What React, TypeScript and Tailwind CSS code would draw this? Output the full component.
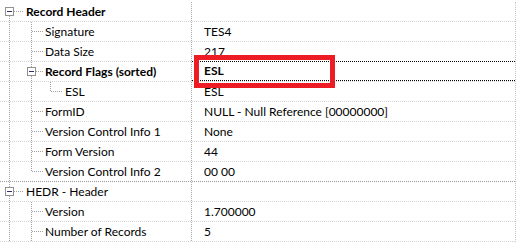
type Row = {
  label: string
  value?: string
  bold?: boolean
  valueBold?: boolean
  guide: 'root-first' | 'root' | 'child' | 'child-last' | 'branch' | 'leaf2'
  indent: number
  focused?: boolean
  sepDark?: boolean
}

const rows: Row[] = [
  { label: 'Record Header', bold: true, guide: 'root-first', indent: 26 },
  { label: 'Signature', value: 'TES4', guide: 'child', indent: 45 },
  { label: 'Data Size', value: '217', guide: 'child', indent: 45 },
  { label: 'Record Flags (sorted)', value: 'ESL', bold: true, valueBold: true, guide: 'branch', indent: 45, focused: true },
  { label: 'ESL', value: 'ESL', guide: 'leaf2', indent: 65 },
  { label: 'FormID', value: 'NULL - Null Reference [00000000]', guide: 'child', indent: 45 },
  { label: 'Version Control Info 1', value: 'None', guide: 'child', indent: 45 },
  { label: 'Form Version', value: '44', guide: 'child', indent: 45 },
  { label: 'Version Control Info 2', value: '00 00', guide: 'child-last', indent: 45, sepDark: true },
  { label: 'HEDR - Header', guide: 'root', indent: 26 },
  { label: 'Version', value: '1.700000', guide: 'child', indent: 45 },
  { label: 'Number of Records', value: '5', guide: 'child', indent: 45 },
]

const dot = { stroke: '#a0a0a0', strokeWidth: 1, strokeDasharray: '1 1' }

function MinusBox({ x }: { x: number }) {
  return (
    <g>
      <rect x={x + 0.5} y={5.5} width={8} height={8} fill="#fff" stroke="#919191" />
      <line x1={x + 2} y1={9.5} x2={x + 7} y2={9.5} stroke="#2f2f6e" />
    </g>
  )
}

function Guides({ kind }: { kind: Row['guide'] }) {
  return (
    <svg width={70} height={20} className="shrink-0 absolute left-0 top-0">
      {kind === 'root-first' && (
        <>
          <line x1={9.5} y1={14} x2={9.5} y2={20} {...dot} />
          <line x1={14} y1={9.5} x2={24} y2={9.5} {...dot} />
          <MinusBox x={5} />
        </>
      )}
      {kind === 'root' && (
        <>
          <line x1={9.5} y1={0} x2={9.5} y2={5} {...dot} />
          <line x1={9.5} y1={14} x2={9.5} y2={20} {...dot} />
          <line x1={14} y1={9.5} x2={24} y2={9.5} {...dot} />
          <MinusBox x={5} />
        </>
      )}
      {kind !== 'root-first' && kind !== 'root' && <line x1={9.5} y1={0} x2={9.5} y2={20} {...dot} />}
      {(kind === 'child' || kind === 'child-last') && (
        <>
          <line x1={31.5} y1={0} x2={31.5} y2={kind === 'child' ? 20 : 10} {...dot} />
          <line x1={32} y1={9.5} x2={43} y2={9.5} {...dot} />
        </>
      )}
      {kind === 'branch' && (
        <>
          <line x1={31.5} y1={0} x2={31.5} y2={5} {...dot} />
          <line x1={31.5} y1={14} x2={31.5} y2={20} {...dot} />
          <line x1={36} y1={9.5} x2={43} y2={9.5} {...dot} />
          <MinusBox x={27} />
        </>
      )}
      {kind === 'leaf2' && (
        <>
          <line x1={31.5} y1={0} x2={31.5} y2={20} {...dot} />
          <line x1={50.5} y1={0} x2={50.5} y2={10} {...dot} />
          <line x1={51} y1={9.5} x2={62} y2={9.5} {...dot} />
        </>
      )}
    </svg>
  )
}

export default function App() {
  return (
    <div
      className="relative w-[520px] h-[248px] overflow-hidden bg-white text-[12px] text-black pt-[2px]"
      style={{ fontFamily: 'Lato, "Noto Sans", sans-serif' }}
    >
      <div className="flex flex-col w-[516px] border-r border-dotted border-[#c8c8c8]">
        {rows.map((r) => (
          <div
            key={r.label}
            className={
              'flex h-[20px] ' +
              (r.sepDark ? 'border-b border-dotted border-[#9a9a9a]' : 'border-b border-dotted border-[#d4d4d4]')
            }
          >
            <div className="relative w-[192px] shrink-0 h-full border-r border-dotted border-[#a8a8a8] flex items-center">
              <Guides kind={r.guide} />
              <span className={'leading-none ' + (r.bold ? 'font-bold' : '')} style={{ marginLeft: r.indent }}>
                {r.label}
              </span>
            </div>
            <div
              className={
                'flex-1 flex items-center pl-[12px] ' +
                (r.focused ? 'border-y border-dotted border-black -my-px h-[20px]' : '')
              }
            >
              <span className={'leading-none ' + (r.valueBold ? 'font-bold' : '')}>{r.value}</span>
            </div>
          </div>
        ))}
      </div>
      <div className="absolute left-[194px] top-[55px] w-[141px] h-[33px] border-[5px] border-[#ed1c24]" />
    </div>
  )
}
